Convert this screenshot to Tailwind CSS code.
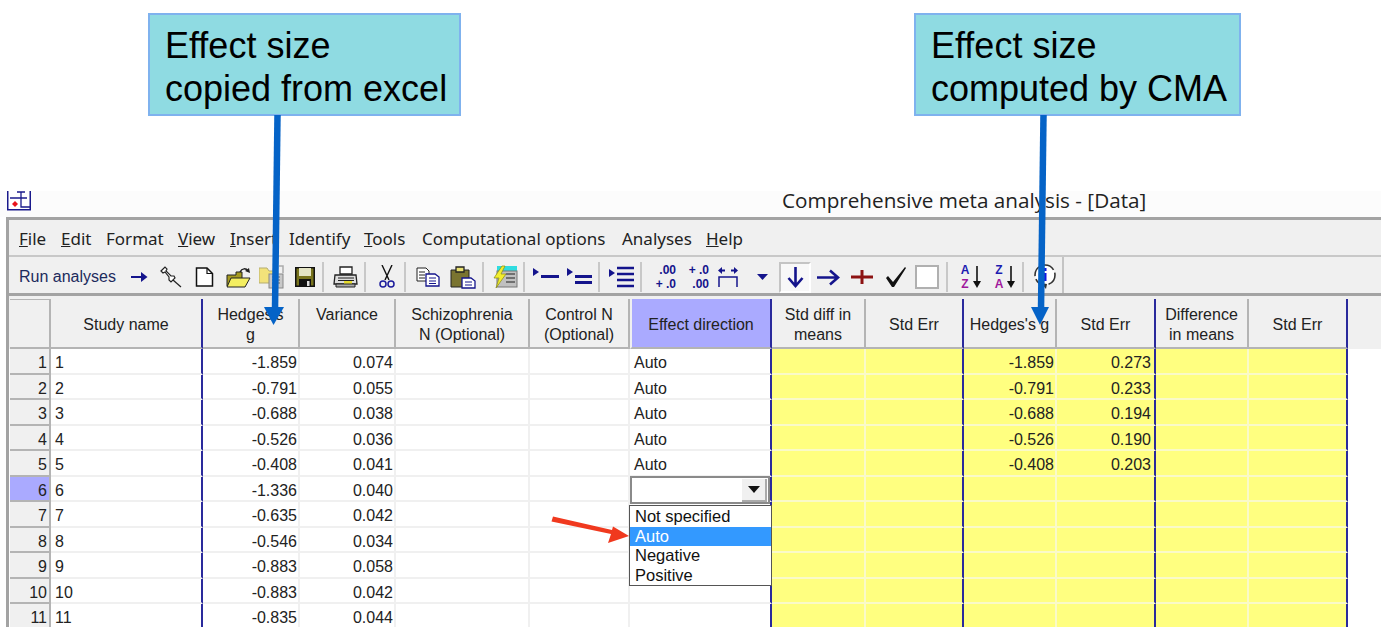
<!DOCTYPE html>
<html lang="en">
<head>
    <meta charset="UTF-8">
    <title>Comprehensive meta analysis - [Data]</title>
    <script src="https://cdn.jsdelivr.net/npm/@tailwindcss/browser@4"></script>
</head>
<body class="bg-white h-[627px] w-[1381px] overflow-hidden relative font-['Liberation_Sans',sans-serif]">

    <!-- Callouts -->
    <div class="absolute left-[148px] top-[13px] w-[313px] h-[103px] bg-[#8fdbe2] border-2 border-[#7fb2ee] pl-[15px] pt-[9px] text-[36px] leading-[43px] text-black">Effect size<br>copied from excel</div>
    <div class="absolute left-[914px] top-[13px] w-[327px] h-[103px] bg-[#8fdbe2] border-2 border-[#7fb2ee] pl-[15px] pt-[9px] text-[36px] leading-[43px] text-black">Effect size<br>computed by CMA</div>

    <!-- Window -->
    <div class="absolute left-0 top-[191px] w-[1381px] h-[436px] flex flex-col">
        <!-- Title bar -->
        <div class="h-[26px] bg-[#fcfcfc] flex items-start relative shrink-0">
            <svg class="ml-[7px]" width="24" height="20" viewBox="0 0 24 20" fill="none" stroke="#1a1a8c">
                <path d="M.75 0V18.750H23.250V0" fill="#fff" stroke-width="1.500"/>
                <path d="M10 1H18M3 7H20M14 1V16H23" stroke-width="1.300"/>
                <path d="M8 10L11 13L8 16L5 13Z" fill="#e8141c" stroke="none"/>
            </svg>
            <div class="ml-[751px] mt-[-4px] text-[20.700px] leading-[26px] text-[#222] font-['Open_Sans',sans-serif]">Comprehensive meta analysis - [Data]</div>
        </div>
        <div class="h-[3px] ml-[6px] bg-[#a3a3a3] shrink-0"></div>

        <div class="ml-[6px] flex-1 flex flex-col border-l-[3px] border-[#a3a3a3] bg-[#f0f0f0] min-h-0">
            <!-- Menu bar -->
            <div class="h-[37px] shrink-0 flex items-center pt-[3px] pl-[10px] border-b-2 border-[#c8c8c8] text-[#222] text-[17px] font-['Noto_Sans',sans-serif]">
                <span class="w-[42px]"><u>F</u>ile</span>
                <span class="w-[45px]"><u>E</u>dit</span>
                <span class="w-[72px]">Format</span>
                <span class="w-[52px]"><u>V</u>iew</span>
                <span class="w-[59px]"><u>I</u>nsert</span>
                <span class="w-[75px]">Identify</span>
                <span class="w-[58px]"><u>T</u>ools</span>
                <span class="w-[200px]">Computational options</span>
                <span class="w-[84px]">Analyses</span>
                <span><u>H</u>elp</span>
            </div>

            <!-- Toolbar -->
            <div class="h-[39px] shrink-0 border-b-[3px] border-[#a3a3a3] flex">
                <div class="w-[1055px] border-r-2 border-[#c4c4c4] flex items-center pt-[4px] pl-[10px] relative">
                    <span class="text-[16px] text-[#1c2a5c] w-[104px] shrink-0">Run analyses</span>
                    <!-- arrow -->
                    <svg class="ml-[8px] shrink-0" width="17" height="12" viewBox="0 0 17 12"><path d="M0 6H14" stroke="#14148c" stroke-width="2"/><path d="M10 1L16.500 6L10 11Z" fill="#14148c"/></svg>
                    <!-- pin -->
                    <svg class="ml-[12px] shrink-0" width="22" height="22" viewBox="0 0 22 22" fill="none" stroke="#222" stroke-width="1.200"><path d="M1 5L5 1L7 3L6 5L11 10L14 10L15 12L11 16L9 14L9 11L5 6L3 7Z" fill="#fff"/><path d="M13 14L21 21"/></svg>
                    <!-- new -->
                    <svg class="ml-[13px] shrink-0" width="19" height="20" viewBox="0 0 19 20"><path d="M1.500 1H12L17.500 6.500V19H1.500Z" fill="#fff" stroke="#111" stroke-width="1.500"/><path d="M12 1V6.500H17.500" fill="none" stroke="#111" stroke-width="1.200"/></svg>
                    <!-- open -->
                    <svg class="ml-[12px] shrink-0" width="25" height="21" viewBox="0 0 25 21"><path d="M1 8H10V5H16V19H1Z" fill="#a59a20" stroke="#222"/><path d="M5 11H24L19 20H1Z" fill="#f4ee60" stroke="#222"/><path d="M14 5C16 1 20 1 22 4" fill="none" stroke="#222" stroke-width="1.500"/><path d="M19 4L24 6L23 1Z" fill="#222"/></svg>
                    <!-- folder stack -->
                    <svg class="ml-[8px] shrink-0" width="25" height="24" viewBox="0 0 25 24"><path d="M0 3H8L10 6H18V18H0Z" fill="#f2e27a" stroke="#b5ad70"/><rect x="10" y="9" width="14" height="14" fill="#c8c8c8" stroke="#888"/><path d="M13 12H21M13 15H21M13 18H21M17 11V21" stroke="#666"/><path d="M20 1H24V8" fill="none" stroke="#aaa" stroke-width="1.500"/></svg>
                    <!-- save -->
                    <svg class="ml-[10px] shrink-0" width="22" height="22" viewBox="0 0 22 22"><path d="M1 1H21V21H1Z" fill="#111"/><rect x="2.500" y="2.500" width="17" height="17" fill="#77731c"/><rect x="5" y="2" width="12" height="8" fill="#e4e4c4"/><rect x="5" y="13" width="12" height="8" fill="#111"/><rect x="13" y="15" width="2.500" height="5" fill="#ddd"/></svg>
                    <span class="ml-[6px] w-[2px] h-[30px] bg-[#c8c8c8] shrink-0"></span>
                    <!-- printer -->
                    <svg class="ml-[9px] shrink-0" width="25" height="22" viewBox="0 0 25 22"><path d="M7 1H19V8H7Z" fill="#fff" stroke="#222" stroke-width="1.300"/><path d="M2 9H23L24 18H1Z" fill="#ddd" stroke="#222" stroke-width="1.300"/><path d="M5 12H21M5 14.500H21" stroke="#222" stroke-width="1.200"/><path d="M3 18H22V21H3Z" fill="#aaa" stroke="#222"/><rect x="11" y="15" width="8" height="2.500" fill="#e6dc30"/></svg>
                    <span class="ml-[6px] w-[2px] h-[30px] bg-[#c8c8c8] shrink-0"></span>
                    <!-- scissors -->
                    <svg class="ml-[13px] shrink-0" width="16" height="24" viewBox="0 0 16 24" fill="none"><path d="M3 0L10 15M13 0L6 15" stroke="#111" stroke-width="1.400"/><circle cx="4" cy="19" r="3" stroke="#1c1c9c" stroke-width="1.500"/><circle cx="12" cy="19" r="3" stroke="#1c1c9c" stroke-width="1.500"/></svg>
                    <span class="ml-[9px] w-[2px] h-[30px] bg-[#c8c8c8] shrink-0"></span>
                    <!-- copy -->
                    <svg class="ml-[10px] shrink-0" width="24" height="20" viewBox="0 0 24 20"><path d="M1 1H10L13 4V14H1Z" fill="#fff" stroke="#222"/><path d="M3 5H9M3 8H9M3 11H9" stroke="#222"/><path d="M10 7H19L23 10V19H10Z" fill="#fff" stroke="#14148c" stroke-width="1.300"/><path d="M13 11H20M13 14H20M13 16.500H20" stroke="#14148c"/></svg>
                    <!-- paste -->
                    <svg class="ml-[10px] shrink-0" width="26" height="23" viewBox="0 0 26 23"><path d="M1 4H19V21H1Z" fill="#7a7430" stroke="#222"/><path d="M6 1H14V6H6Z" fill="#e8e070" stroke="#222" stroke-width="1.300"/><path d="M12 12H21L25 15V22H12Z" fill="#fff" stroke="#14148c" stroke-width="1.300"/><path d="M15 16H22M15 19H22" stroke="#14148c"/></svg>
                    <span class="ml-[6px] w-[2px] h-[30px] bg-[#c8c8c8] shrink-0"></span>
                    <!-- lightning table -->
                    <svg class="ml-[8px] shrink-0" width="26" height="24" viewBox="0 0 26 24"><rect x="5" y="1" width="20" height="5" fill="#30dce0"/><rect x="5" y="6" width="20" height="16" fill="#c0c0c0" stroke="#777"/><path d="M14 9H23M14 13H23M14 17H23" stroke="#555" stroke-width="1.500"/><path d="M10 1L2 13H7L4 23L14 9H9L13 1Z" fill="#f2ee30" stroke="#8a8a10" stroke-width=".7"/></svg>
                    <span class="ml-[5px] w-[2px] h-[30px] bg-[#c8c8c8] shrink-0"></span>
                    <!-- indents -->
                    <svg class="ml-[8px] shrink-0" width="27" height="20" viewBox="0 0 27 20"><path d="M0 1L6 5L0 9Z" fill="#14148c"/><rect x="8" y="8" width="18" height="3" fill="#14148c"/></svg>
                    <svg class="ml-[7px] shrink-0" width="27" height="20" viewBox="0 0 27 20"><path d="M0 1L6 5L0 9Z" fill="#14148c"/><rect x="8" y="8" width="17" height="3" fill="#14148c"/><rect x="8" y="14" width="17" height="3" fill="#14148c"/></svg>
                    <span class="ml-[4px] w-[2px] h-[30px] bg-[#c8c8c8] shrink-0"></span>
                    <svg class="ml-[9px] shrink-0" width="26" height="22" viewBox="0 0 26 22"><path d="M0 3L6 7L0 11Z" fill="#14148c"/><path d="M8 2H25M8 8H25M8 14H25M8 20H25" stroke="#14148c" stroke-width="2.600"/></svg>
                    <span class="ml-[5px] w-[2px] h-[30px] bg-[#c8c8c8] shrink-0"></span>
                    <!-- decimals -->
                    <div class="ml-[9px] w-[25px] shrink-0 text-[#14148c] text-[12px] leading-[14px] font-bold text-right">.00<br>+ .0</div>
                    <div class="ml-[10px] w-[23px] shrink-0 text-[#14148c] text-[12px] leading-[14px] font-bold text-right">+ .0<br>.00</div>
                    <!-- widen -->
                    <svg class="ml-[8px] shrink-0" width="22" height="22" viewBox="0 0 22 22" fill="#14148c"><path d="M1 4.500L5 1V8Z"/><path d="M4 3.500H8V5.500H4Z"/><path d="M21 4.500L17 1V8Z"/><path d="M14 3.500H18V5.500H14Z"/><path d="M2 21V11H20V21" fill="none" stroke="#14148c" stroke-width="1.500"/></svg>
                    <svg class="ml-[18px] shrink-0" width="11" height="6" viewBox="0 0 11 6"><path d="M0 0H11L5.500 6Z" fill="#14148c"/></svg>
                    <!-- selected down button -->
                    <div class="ml-[11px] w-[32px] h-[31px] shrink-0 border-t-2 border-l-2 border-[#c4c4c4] border-r-2 border-b-2 border-r-white border-b-white bg-[#f8f8f8] flex items-center justify-center">
                        <svg width="17" height="22" viewBox="0 0 17 22" fill="none" stroke="#14148c" stroke-width="2.600"><path d="M8.500 1V20M1.500 12L8.500 20L15.500 12"/></svg>
                    </div>
                    <svg class="ml-[6px] shrink-0" width="23" height="17" viewBox="0 0 23 17" fill="none" stroke="#14148c" stroke-width="2.600"><path d="M0 8.500H21M13 1.500L21 8.500L13 15.500"/></svg>
                    <svg class="ml-[11px] shrink-0" width="22" height="16" viewBox="0 0 22 16" fill="#8c1212"><rect y="6.500" width="22" height="3"/><rect x="9.500" y="1" width="3" height="14"/></svg>
                    <svg class="ml-[12px] shrink-0" width="22" height="22" viewBox="0 0 22 22"><path d="M1 12L3 10L8 16L20 1L21 2L9 21H7Z" fill="#111"/></svg>
                    <div class="ml-[8px] w-[24px] h-[24px] shrink-0 bg-white border-2 border-[#b0b0b0]"></div>
                    <span class="ml-[7px] w-[2px] h-[30px] bg-[#c8c8c8] shrink-0"></span>
                    <!-- sort -->
                    <div class="ml-[10px] w-[14px] shrink-0 text-[12px] leading-[14px] font-bold text-center"><div class="text-[#1c1cb0]">A</div><div class="text-[#a0189c]">Z</div></div>
                    <svg class="shrink-0" width="10" height="22" viewBox="0 0 10 22"><path d="M5 0V18" stroke="#111" stroke-width="1.600"/><path d="M1 15H9L5 22Z" fill="#111"/></svg>
                    <div class="ml-[10px] w-[14px] shrink-0 text-[12px] leading-[14px] font-bold text-center"><div class="text-[#1c1cb0]">Z</div><div class="text-[#a0189c]">A</div></div>
                    <svg class="shrink-0" width="10" height="22" viewBox="0 0 10 22"><path d="M5 0V18" stroke="#111" stroke-width="1.600"/><path d="M1 15H9L5 22Z" fill="#111"/></svg>
                    <span class="ml-[6px] w-[2px] h-[30px] bg-[#c8c8c8] shrink-0"></span>
                    <!-- help balloon -->
                    <svg class="ml-[8px] shrink-0" width="26" height="26" viewBox="0 0 26 26"><circle cx="13" cy="11" r="10" fill="#fff" stroke="#333" stroke-width="1.600" stroke-dasharray="12 3"/><path d="M9 19L14 25L15 20Z" fill="#333"/><rect x="11.500" y="4" width="3" height="3" fill="#1414e0"/><rect x="11.500" y="9" width="3" height="8" fill="#1414e0"/></svg>
                </div>
            </div>

            <!-- Grid header -->
            <div class="h-[53px] shrink-0 flex text-[#222] text-[16px] leading-[19.500px] text-center">
                <div class="w-[42px] pt-[3px] shrink-0"><div class="h-[50px] border-r-2 border-b-2 border-[#b4b4b4] ml-[1px] border-t border-t-[#b4b4b4]"></div></div>
                <div class="w-[152px] shrink-0 pt-[3px]"><div class="h-[50px] pt-[4px] border-r-2 border-r-[#2a2a9c] border-b-2 border-b-[#b4b4b4] flex items-center justify-center">Study name</div></div>
                <div class="w-[97px] shrink-0 pt-[3px]"><div class="h-[50px] border-r-2 border-b-2 border-[#b4b4b4] pt-[6px]">Hedges's<br>g</div></div>
                <div class="w-[96px] shrink-0 pt-[3px]"><div class="h-[50px] border-r-2 border-b-2 border-[#b4b4b4] pt-[6px]">Variance</div></div>
                <div class="w-[134px] shrink-0 pt-[3px]"><div class="h-[50px] border-r-2 border-b-2 border-[#b4b4b4] pt-[6px]">Schizophrenia<br>N (Optional)</div></div>
                <div class="w-[100px] shrink-0 pt-[3px]"><div class="h-[50px] border-r-2 border-b-2 border-[#b4b4b4] pt-[6px]">Control N<br>(Optional)</div></div>
                <div class="w-[142px] shrink-0 pt-[3px]"><div class="h-[50px] pt-[4px] bg-[#aaaaff] border-l-[2px] border-l-[#f0f0f0] border-r-2 border-r-[#2a2a9c] border-b-2 border-b-[#b4b4b4] flex items-center justify-center">Effect direction</div></div>
                <div class="w-[94px] shrink-0 pt-[3px]"><div class="h-[50px] border-r-2 border-b-2 border-[#b4b4b4] pt-[6px]">Std diff in<br>means</div></div>
                <div class="w-[98px] shrink-0 pt-[3px]"><div class="h-[50px] pt-[4px] border-r-2 border-r-[#2a2a9c] border-b-2 border-b-[#b4b4b4] flex items-center justify-center">Std Err</div></div>
                <div class="w-[93px] shrink-0 pt-[3px]"><div class="h-[50px] pt-[4px] border-r-2 border-b-2 border-[#b4b4b4] flex items-center justify-center">Hedges's g</div></div>
                <div class="w-[99px] shrink-0 pt-[3px]"><div class="h-[50px] pt-[4px] border-r-2 border-r-[#2a2a9c] border-b-2 border-b-[#b4b4b4] flex items-center justify-center">Std Err</div></div>
                <div class="w-[93px] shrink-0 pt-[3px]"><div class="h-[50px] border-r-2 border-b-2 border-[#b4b4b4] pt-[6px]">Difference<br>in means</div></div>
                <div class="w-[99px] shrink-0 pt-[3px]"><div class="h-[50px] pt-[4px] border-r-2 border-r-[#2a2a9c] border-b-2 border-b-[#b4b4b4] flex items-center justify-center">Std Err</div></div>
                <div class="flex-1"></div>
            </div>

            <!-- Grid rows -->
            <div id="rows" class="flex-1 bg-white min-h-0 overflow-hidden text-[16px] text-[#222]"></div>
        </div>
    </div>

    <!-- Dropdown opened on row 6 -->
    <div class="absolute left-[630px] top-[476px] w-[140px] h-[28px] bg-white border-2 border-[#8a8a8a] flex justify-end items-center pr-[1px]">
        <div class="w-[25px] h-[23px] bg-[#f0f0f0] border-b-2 border-r-2 border-[#aaa] flex items-center justify-center">
            <svg width="12" height="7" viewBox="0 0 12 7"><path d="M0 0H12L6 7Z" fill="#111"/></svg>
        </div>
    </div>
    <div class="absolute left-[629px] top-[505px] w-[143px] h-[81px] bg-white border border-[#555] text-[16.500px] leading-[19.500px] text-[#111] pt-[1px]">
        <div class="pl-[5px]">Not specified</div>
        <div class="pl-[5px] bg-[#3399ff] text-white">Auto</div>
        <div class="pl-[5px]">Negative</div>
        <div class="pl-[5px]">Positive</div>
    </div>

    <!-- Overlay arrows -->
    <svg class="absolute left-0 top-0" width="1381" height="627" viewBox="0 0 1381 627">
        <path d="M277.500 115L275 310" stroke="#0563c7" stroke-width="6.500" fill="none"/>
        <path d="M264 307H284L273.500 325Z" fill="#0563c7"/>
        <path d="M1043.500 115L1041 310" stroke="#0563c7" stroke-width="6.500" fill="none"/>
        <path d="M1031 307H1049L1040 325Z" fill="#0563c7"/>
        <path d="M553 516.500L551.500 521.500L611 534L608 543L629 536L613 526.500L612 530Z" fill="#f0391e"/>
    </svg>

    <script>
        const data = [
            ["-1.859", "0.074", "0.273"],
            ["-0.791", "0.055", "0.233"],
            ["-0.688", "0.038", "0.194"],
            ["-0.526", "0.036", "0.190"],
            ["-0.408", "0.041", "0.203"],
            ["-1.336", "0.040", ""],
            ["-0.635", "0.042", ""],
            ["-0.546", "0.034", ""],
            ["-0.883", "0.058", ""],
            ["-0.883", "0.042", ""],
            ["-0.835", "0.044", ""]
        ];

        function loadRows() {
            let html = "";
            data.forEach((d, i) => {
                let n = i + 1;
                let done = i < 5;
                let headBg = i === 5 ? "bg-[#aaaaff]" : "bg-[#f0f0f0]";
                let g = done ? d[0] : "";
                html += `<div class="h-[25.500px] flex leading-[27px]">
                    <div class="w-[42px] shrink-0 pl-[1px]"><div class="h-full ${headBg} border-r-2 border-b-2 border-[#b4b4b4] text-right pr-[2px]">${n}</div></div>
                    <div class="w-[152px] shrink-0 border-r-2 border-r-[#2a2a9c] border-b-2 border-b-[#f0f0f0] pl-[4px]">${n}</div>
                    <div class="w-[97px] shrink-0 border-r-2 border-b-2 border-[#f0f0f0] text-right pr-[1px]">${d[0]}</div>
                    <div class="w-[96px] shrink-0 border-r-2 border-b-2 border-[#f0f0f0] text-right pr-[1px]">${d[1]}</div>
                    <div class="w-[134px] shrink-0 border-r-2 border-b-2 border-[#f0f0f0]"></div>
                    <div class="w-[100px] shrink-0 border-r-2 border-b-2 border-[#f0f0f0]"></div>
                    <div class="w-[142px] shrink-0 border-r-2 border-r-[#2a2a9c] border-b-2 border-b-[#f0f0f0] pl-[4px]">${done ? "Auto" : ""}</div>
                    <div class="w-[94px] shrink-0 bg-[#ffff80] border-r-2 border-b-2 border-[#fafac8]"></div>
                    <div class="w-[98px] shrink-0 bg-[#ffff80] border-r-2 border-r-[#2a2a9c] border-b-2 border-b-[#fafac8]"></div>
                    <div class="w-[93px] shrink-0 bg-[#ffff80] border-r-2 border-b-2 border-[#fafac8] text-right pr-[1px]">${g}</div>
                    <div class="w-[99px] shrink-0 bg-[#ffff80] border-r-2 border-r-[#2a2a9c] border-b-2 border-b-[#fafac8] text-right pr-[3px]">${d[2]}</div>
                    <div class="w-[93px] shrink-0 bg-[#ffff80] border-r-2 border-b-2 border-[#fafac8]"></div>
                    <div class="w-[99px] shrink-0 bg-[#ffff80] border-r-2 border-r-[#2a2a9c] border-b-2 border-b-[#fafac8]"></div>
                </div>`;
            });
            document.getElementById("rows").innerHTML = html;
        }

        loadRows();
    </script>
</body>
</html>
